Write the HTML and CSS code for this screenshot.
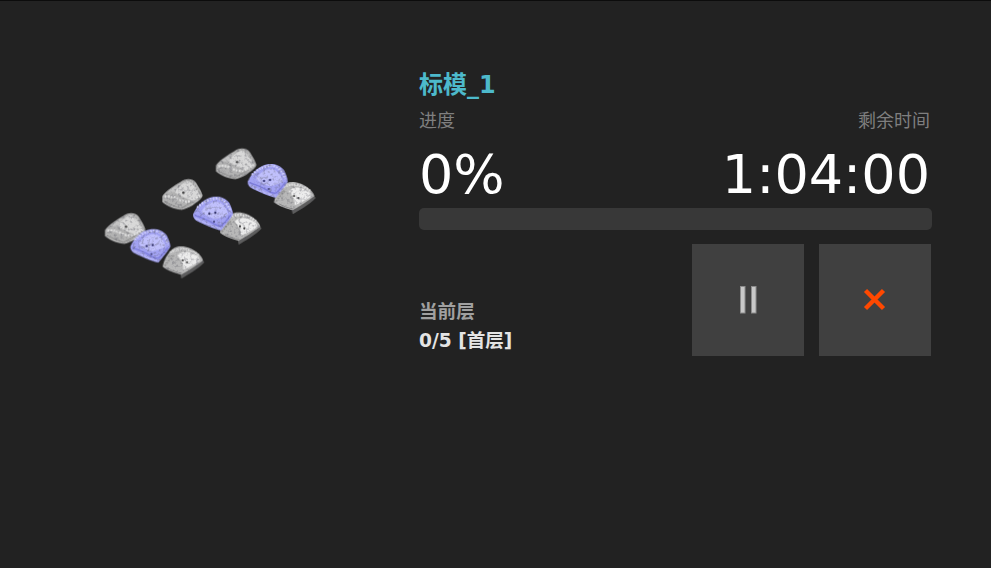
FILE: index.html
```html
<!DOCTYPE html>
<html lang="zh">
<head>
<meta charset="utf-8">
<title>标模_1</title>
<link rel="stylesheet" href="styles.css">
</head>
<body>
<main class="page">
  <section class="preview">
    <svg class="models" viewBox="0 0 720 450" width="240" height="150" aria-hidden="true">
      <defs>
        <filter id="soft" x="0" y="0" width="720" height="450" filterUnits="userSpaceOnUse" color-interpolation-filters="sRGB">
          <feTurbulence type="fractalNoise" baseFrequency="0.11" numOctaves="2" seed="4" result="noise"/>
          <feColorMatrix in="noise" type="matrix" values="0 0 0 0 0  0 0 0 0 0  0 0 0 0 0  -1.1 0 0 0 0.58" result="shade"/>
          <feFlood flood-color="#55555f"/>
          <feComposite in2="shade" operator="in" result="dark"/>
          <feComposite in="dark" in2="SourceAlpha" operator="in" result="speck"/>
          <feMerge result="all"><feMergeNode in="SourceGraphic"/><feMergeNode in="speck"/></feMerge>
          <feGaussianBlur in="all" stdDeviation="1.500"/>
        </filter>
        <g id="jawA">
          <path d="M45 270C56 254 82 238 99 228C112 219 132 214 146 230C156 246 162 256 166 268C164 280 148 288 136 298C120 306 108 313 98 311C84 308 64 304 45 288Z" fill="#b2b2b2"/>
          <path d="M82 258C92 244 104 232 120 226C134 224 146 240 154 258C158 268 150 276 140 282C120 280 98 270 82 258Z" fill="#d8d8d8"/>
          <path d="M60 258C72 248 86 240 100 232C92 244 86 252 82 258Z" fill="#c4c4c4"/>
          <path d="M52 272C66 270 80 272 94 280C106 286 116 288 124 286C136 282 148 276 158 268" fill="none" stroke="#e2e2e2" stroke-width="7" stroke-dasharray="6 3"/>
          <path d="M50 286C70 296 84 302 100 307C114 300 124 294 136 288" fill="none" stroke="#8e8e8e" stroke-width="3"/>
          <path d="M122 222C134 228 148 244 156 262" fill="none" stroke="#a0a0a0" stroke-width="4" stroke-dasharray="5 4"/>
          <circle cx="108" cy="260" r="3.600" fill="#333333"/>
        </g>
        <g id="jawB">
          <path d="M121 320C129 302 142 284 166 272C184 264 214 264 230 286C236 298 241 310 241 320C234 334 218 352 205 368C186 364 156 352 130 338C123 332 121 326 121 320Z" fill="#a2a2f2"/>
          <path d="M146 312C154 296 172 282 192 282C210 284 224 304 226 320C212 328 200 332 186 334C172 330 156 322 146 312Z" fill="#c0c0fc"/>
          <path d="M134 300C146 286 168 274 190 272C210 272 226 288 234 312" fill="none" stroke="#d0d0fc" stroke-width="7" stroke-dasharray="5 4"/>
          <path d="M126 322C150 332 164 336 176 344C188 352 198 356 206 354C218 344 226 332 234 322" fill="none" stroke="#7c7cdc" stroke-width="4"/>
          <path d="M128 332C154 346 178 356 204 364" fill="none" stroke="#b4b4f8" stroke-width="5"/>
          <circle cx="170" cy="318" r="3.500" fill="#33336e"/>
          <circle cx="188" cy="315" r="3.500" fill="#33336e"/>
          <circle cx="184" cy="342" r="3" fill="#3c3c78"/>
        </g>
        <g id="jawC">
          <path d="M274 416C290 406 324 388 343 367L332 354L270 396Z" fill="#5e5e5e"/>
          <path d="M218 380C222 360 232 338 252 324C270 314 302 320 324 340C334 348 338 356 339 362C320 376 296 392 274 404C258 400 232 392 218 380Z" fill="#b8b8b8"/>
          <path d="M262 346C278 330 300 334 322 348C332 356 330 362 322 368C306 378 292 386 280 388C282 372 272 358 262 346Z" fill="#ececec"/>
          <path d="M240 338C262 322 296 322 326 346" fill="none" stroke="#e0e0e0" stroke-width="7" stroke-dasharray="5 3"/>
          <path d="M224 378C232 366 242 356 252 344" fill="none" stroke="#949494" stroke-width="5" stroke-dasharray="6 3"/>
          <path d="M232 384C246 392 262 398 276 400" fill="none" stroke="#8c8c8c" stroke-width="3"/>
          <circle cx="278" cy="361" r="3.200" fill="#333333"/>
          <circle cx="291" cy="367" r="3.200" fill="#333333"/>
        </g>
      </defs>
      <g filter="url(#soft)">
        <use href="#jawA"/>
        <use href="#jawC"/>
        <use href="#jawB"/>
        <use href="#jawA" transform="translate(172 -102)"/>
        <use href="#jawC" transform="translate(172 -102)"/>
        <use href="#jawB" transform="translate(188 -97)"/>
        <use href="#jawA" transform="translate(333 -194)"/>
        <use href="#jawC" transform="translate(334 -193)"/>
        <use href="#jawB" transform="translate(352 -195)"/>
      </g>
    </svg>
  </section>
  <section class="status">
    <h1 class="title">标模_1</h1>
    <div class="row labels"><span>进度</span><span>剩余时间</span></div>
    <div class="row values"><span>0%</span><span>1:04:00</span></div>
    <div class="bar"></div>
    <div class="row lower">
      <div class="layer">
        <div class="layer-label">当前层</div>
        <div class="layer-value">0/5 [首层]</div>
      </div>
      <div class="actions">
        <button class="action" type="button" aria-label="暂停">
          <svg viewBox="0 0 112 112" width="112" height="112">
            <rect x="48.5" y="42.5" width="4.5" height="26.5" fill="#c8c8c8" stroke="#8c8c8c" stroke-width="1"/>
            <rect x="59.5" y="42.5" width="4.5" height="26.5" fill="#c8c8c8" stroke="#8c8c8c" stroke-width="1"/>
          </svg>
        </button>
        <button class="action" type="button" aria-label="取消">
          <svg viewBox="0 0 112 112" width="112" height="112">
            <path d="M46.500 46.500L64.500 64.500M64.500 46.500L46.500 64.500" fill="none" stroke="#ff4800" stroke-width="4.400"/>
          </svg>
        </button>
      </div>
    </div>
  </section>
</main>
</body>
</html>
```
FILE: styles.css
```css
* { box-sizing: border-box; }
html, body { margin: 0; height: 100%; }
body {
  background: #222222;
  border-top: 1px solid #0c0c0c;
  font-family: "DejaVu Sans", "Noto Sans CJK SC", sans-serif;
  overflow: hidden;
}
.page {
  display: flex;
  height: 100%;
}
.preview {
  width: 419px;
  flex: none;
  padding: 139px 0 0 90px;
}
.models { display: block; }
.status {
  width: 513px;
  flex: none;
  padding-top: 68px;
}
.title {
  margin: 0;
  font-size: 24px;
  line-height: 32px;
  font-weight: 700;
  color: #4db9cb;
}
.row {
  display: flex;
  justify-content: space-between;
}
.labels {
  margin-top: 7px;
  font-size: 18px;
  line-height: 26px;
  color: #7f7f7f;
  padding-right: 2px;
}
.values {
  margin-top: 10px;
  font-size: 54px;
  line-height: 62px;
  color: #ffffff;
  padding-right: 2px;
}
.bar {
  margin-top: 2px;
  height: 22px;
  border-radius: 5px;
  background: #383838;
}
.lower {
  margin-top: 14px;
  align-items: flex-end;
  padding-right: 1px;
}
.layer {
  padding-bottom: 1px;
  font-size: 18.6px;
  line-height: 29px;
  font-weight: 700;
}
.layer-label { color: #a0a0a0; }
.layer-value { color: #e4e4e4; }
.actions {
  display: flex;
  gap: 15px;
}
.action {
  width: 112px;
  height: 112px;
  padding: 0;
  border: 0;
  background: #404040;
}
.action svg { display: block; }
```
